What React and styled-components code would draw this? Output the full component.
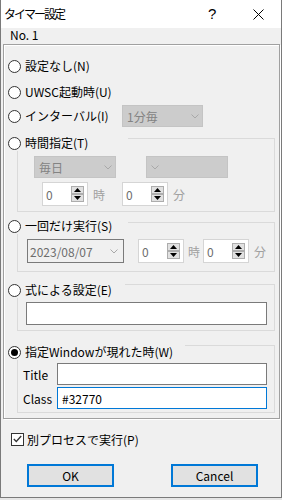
import React from 'react'
import styled, { createGlobalStyle } from 'styled-components'

const GlobalStyle = createGlobalStyle`
  html, body {
    margin: 0;
    padding: 0;
    background: #e6e6e6;
  }
  body {
    font-family: 'Noto Sans CJK JP', 'Noto Sans', sans-serif;
    font-size: 12px;
    color: #000;
  }
`

const Window = styled.div`
  width: 282px;
  height: 498px;
  box-sizing: border-box;
  border: 1px solid #7a7a7a;
  border-top: none;
  background: #f0f0f0;
  display: flex;
  flex-direction: column;
`

const TitleBar = styled.div`
  height: 28px;
  background: #fff;
  display: flex;
  align-items: center;
  padding-left: 3px;
`

const Caption = styled.div`
  flex: 1;
  font-size: 12px;
  letter-spacing: -2px;
  line-height: 16px;
`

const Help = styled.div`
  width: 14px;
  font-family: 'Liberation Sans', sans-serif;
  font-size: 15px;
  line-height: 16px;
  margin-right: 31px;
`

const Close = styled.div`
  width: 11px;
  height: 11px;
  margin-right: 17px;
  display: flex;
`

const NoLabel = styled.div`
  height: 14px;
  line-height: 14px;
  padding-left: 9px;
`

const Outer = styled.div`
  margin: 2px 1px 0 2px;
  height: 375px;
  box-sizing: border-box;
  border: 1px solid #a0a0a0;
  box-shadow: inset 1px 1px 0 #fff, 1px 1px 0 #fff;
  padding: 11px 4px 0 4px;
  display: flex;
  flex-direction: column;
`

const Row = styled.div`
  display: flex;
  align-items: center;
  height: ${p => p.$h || 20}px;
  margin-top: ${p => p.$mt || 0}px;
`

const RadioLabel = styled.div`
  display: flex;
  align-items: center;
  gap: 4px;
  height: 16px;
  line-height: 16px;
  width: ${p => (p.$w ? `${p.$w}px` : 'auto')};
  flex: none;
`

const Legend = styled(RadioLabel)`
  background: #f0f0f0;
  position: relative;
  z-index: 1;
  margin-top: ${p => p.$mt}px;
  margin-bottom: ${p => p.$mb}px;
`

const RadioDot = styled.span`
  width: 13px;
  height: 13px;
  box-sizing: border-box;
  border-radius: 50%;
  border: 1px solid #333;
  background: #fff;
  display: flex;
  align-items: center;
  justify-content: center;
  flex: none;
  &::after {
    content: '';
    width: 7px;
    height: 7px;
    border-radius: 50%;
    background: #000;
    display: ${p => (p.$checked ? 'block' : 'none')};
  }
`

const Group = styled.div`
  margin-left: 9px;
  box-sizing: border-box;
  height: ${p => p.$h}px;
  border: 1px solid #dadada;
  padding: ${p => p.$pad};
  display: flex;
  flex-direction: column;
  gap: ${p => p.$gap || 0}px;
`

const Line = styled.div`
  display: flex;
  align-items: center;
`

const Combo = styled.div`
  width: ${p => p.$w}px;
  height: 22px;
  box-sizing: border-box;
  border: 1px solid #c4c4c4;
  background: #cccccc;
  color: #838383;
  display: flex;
  align-items: center;
  justify-content: space-between;
  padding: 0 3px 0 4px;
  margin-left: ${p => p.$ml || 0}px;
  flex: none;
`

const DateBox = styled(Combo)`
  height: 24px;
  border-color: #7a7a7a;
  background: #f0f0f0;
  color: #6d6d6d;
  padding-left: 2px;
  padding-right: 5px;
`

const Spin = styled.div`
  width: ${p => p.$w}px;
  height: 24px;
  box-sizing: border-box;
  border: 1px solid #d5d5d5;
  background: #fff;
  color: #6d6d6d;
  display: flex;
  align-items: center;
  padding: 0 3px 0 3px;
  margin-left: ${p => p.$ml || 0}px;
  flex: none;
`

const SpinValue = styled.span`
  flex: 1;
`

const SpinButtons = styled.div`
  width: 13px;
  display: flex;
  flex-direction: column;
`

const SpinButton = styled.div`
  height: 8px;
  box-sizing: border-box;
  border: 1px solid #adadad;
  background: #e1e1e1;
  display: flex;
  align-items: center;
  justify-content: center;
`

const Unit = styled.span`
  color: #a0a0a0;
  margin-left: ${p => p.$ml}px;
  width: 12px;
  flex: none;
`

const TextBox = styled.div`
  height: ${p => p.$h || 22}px;
  box-sizing: border-box;
  border: 1px solid ${p => (p.$focus ? '#0078d7' : '#7a7a7a')};
  background: #fff;
  flex: 1;
  display: flex;
  align-items: center;
  padding-left: 4px;
`

const FieldLabel = styled.span`
  width: 34px;
  flex: none;
`

const CheckRow = styled.div`
  display: flex;
  align-items: center;
  gap: 3px;
  height: 14px;
  margin: 13px 0 0 10px;
`

const CheckBox = styled.span`
  width: 13px;
  height: 13px;
  box-sizing: border-box;
  border: 1px solid #333;
  background: #fff;
  display: flex;
  align-items: center;
  justify-content: center;
`

const Buttons = styled.div`
  display: flex;
  margin: 18px 0 0 26px;
  gap: 57px;
`

const Button = styled.div`
  width: 87px;
  height: 23px;
  box-sizing: border-box;
  border: 2px solid #0078d7;
  background: #e1e1e1;
  display: flex;
  align-items: center;
  justify-content: center;
`

const Chevron = () => (
  <svg width="8" height="5" viewBox="0 0 8 5">
    <polyline points="0.5,0.5 4,4 7.5,0.5" fill="none" stroke="#a8a8a8" strokeWidth="1" />
  </svg>
)

const Tri = ({ up }) => (
  <svg width="7" height="4" viewBox="0 0 7 4">
    <polygon points={up ? '3.5,0 7,4 0,4' : '0,0 7,0 3.5,4'} fill="#000" />
  </svg>
)

const SpinBox = ({ w, ml }) => (
  <Spin $w={w} $ml={ml}>
    <SpinValue>0</SpinValue>
    <SpinButtons>
      <SpinButton><Tri up /></SpinButton>
      <SpinButton><Tri /></SpinButton>
    </SpinButtons>
  </Spin>
)

const Radio = ({ checked, children }) => (
  <>
    <RadioDot $checked={checked} />
    <span>{children}</span>
  </>
)

export default function App() {
  return (
    <>
      <GlobalStyle />
      <Window>
        <TitleBar>
          <Caption>タイマー設定</Caption>
          <Help>?</Help>
          <Close>
            <svg width="11" height="11" viewBox="0 0 11 11">
              <path d="M0.5 0.5 L10.5 10.5 M10.5 0.5 L0.5 10.5" stroke="#000" strokeWidth="1" />
            </svg>
          </Close>
        </TitleBar>
        <NoLabel>No. 1</NoLabel>
        <Outer>
          <Row>
            <RadioLabel><Radio>設定なし(N)</Radio></RadioLabel>
          </Row>
          <Row $mt={6}>
            <RadioLabel><Radio>UWSC起動時(U)</Radio></RadioLabel>
          </Row>
          <Row $h={22} $mt={3}>
            <RadioLabel $w={114}><Radio>インターバル(I)</Radio></RadioLabel>
            <Combo $w={81}>1分毎<Chevron /></Combo>
          </Row>

          <Legend $w={120} $mt={8} $mb={-13}><Radio>時間指定(T)</Radio></Legend>
          <Group $h={74} $pad="17px 0 0 16px" $gap={4}>
            <Line>
              <Combo $w={82}>毎日<Chevron /></Combo>
              <Combo $w={82} $ml={30}> <Chevron /></Combo>
            </Line>
            <Line>
              <SpinBox w={46} ml={8} />
              <Unit $ml={5}>時</Unit>
              <SpinBox w={46} ml={17} />
              <Unit $ml={5}>分</Unit>
            </Line>
          </Group>

          <Legend $w={120} $mt={6} $mb={-12}><Radio>一回だけ実行(S)</Radio></Legend>
          <Group $h={50} $pad="16px 0 0 9px">
            <Line>
              <DateBox $w={97}>2023/08/07<Chevron /></DateBox>
              <SpinBox w={46} ml={14} />
              <Unit $ml={4}>時</Unit>
              <SpinBox w={46} ml={3} />
              <Unit $ml={5}>分</Unit>
            </Line>
          </Group>

          <Legend $w={117} $mt={10} $mb={-14}><Radio>式による設定(E)</Radio></Legend>
          <Group $h={47} $pad="17px 7px 0 8px">
            <Line>
              <TextBox $h={23} />
            </Line>
          </Group>

          <Legend $w={177} $mt={13} $mb={-15}><Radio checked>指定Windowが現れた時(W)</Radio></Legend>
          <Group $h={68} $pad="17px 7px 0 5px" $gap={2}>
            <Line>
              <FieldLabel>Title</FieldLabel>
              <TextBox />
            </Line>
            <Line>
              <FieldLabel>Class</FieldLabel>
              <TextBox $focus>#32770</TextBox>
            </Line>
          </Group>
        </Outer>

        <CheckRow>
          <CheckBox>
            <svg width="9" height="8" viewBox="0 0 9 8">
              <polyline points="0.8,4 3.3,6.5 8.2,1" fill="none" stroke="#333" strokeWidth="1.3" />
            </svg>
          </CheckBox>
          <span>別プロセスで実行(P)</span>
        </CheckRow>

        <Buttons>
          <Button>OK</Button>
          <Button>Cancel</Button>
        </Buttons>
      </Window>
    </>
  )
}
